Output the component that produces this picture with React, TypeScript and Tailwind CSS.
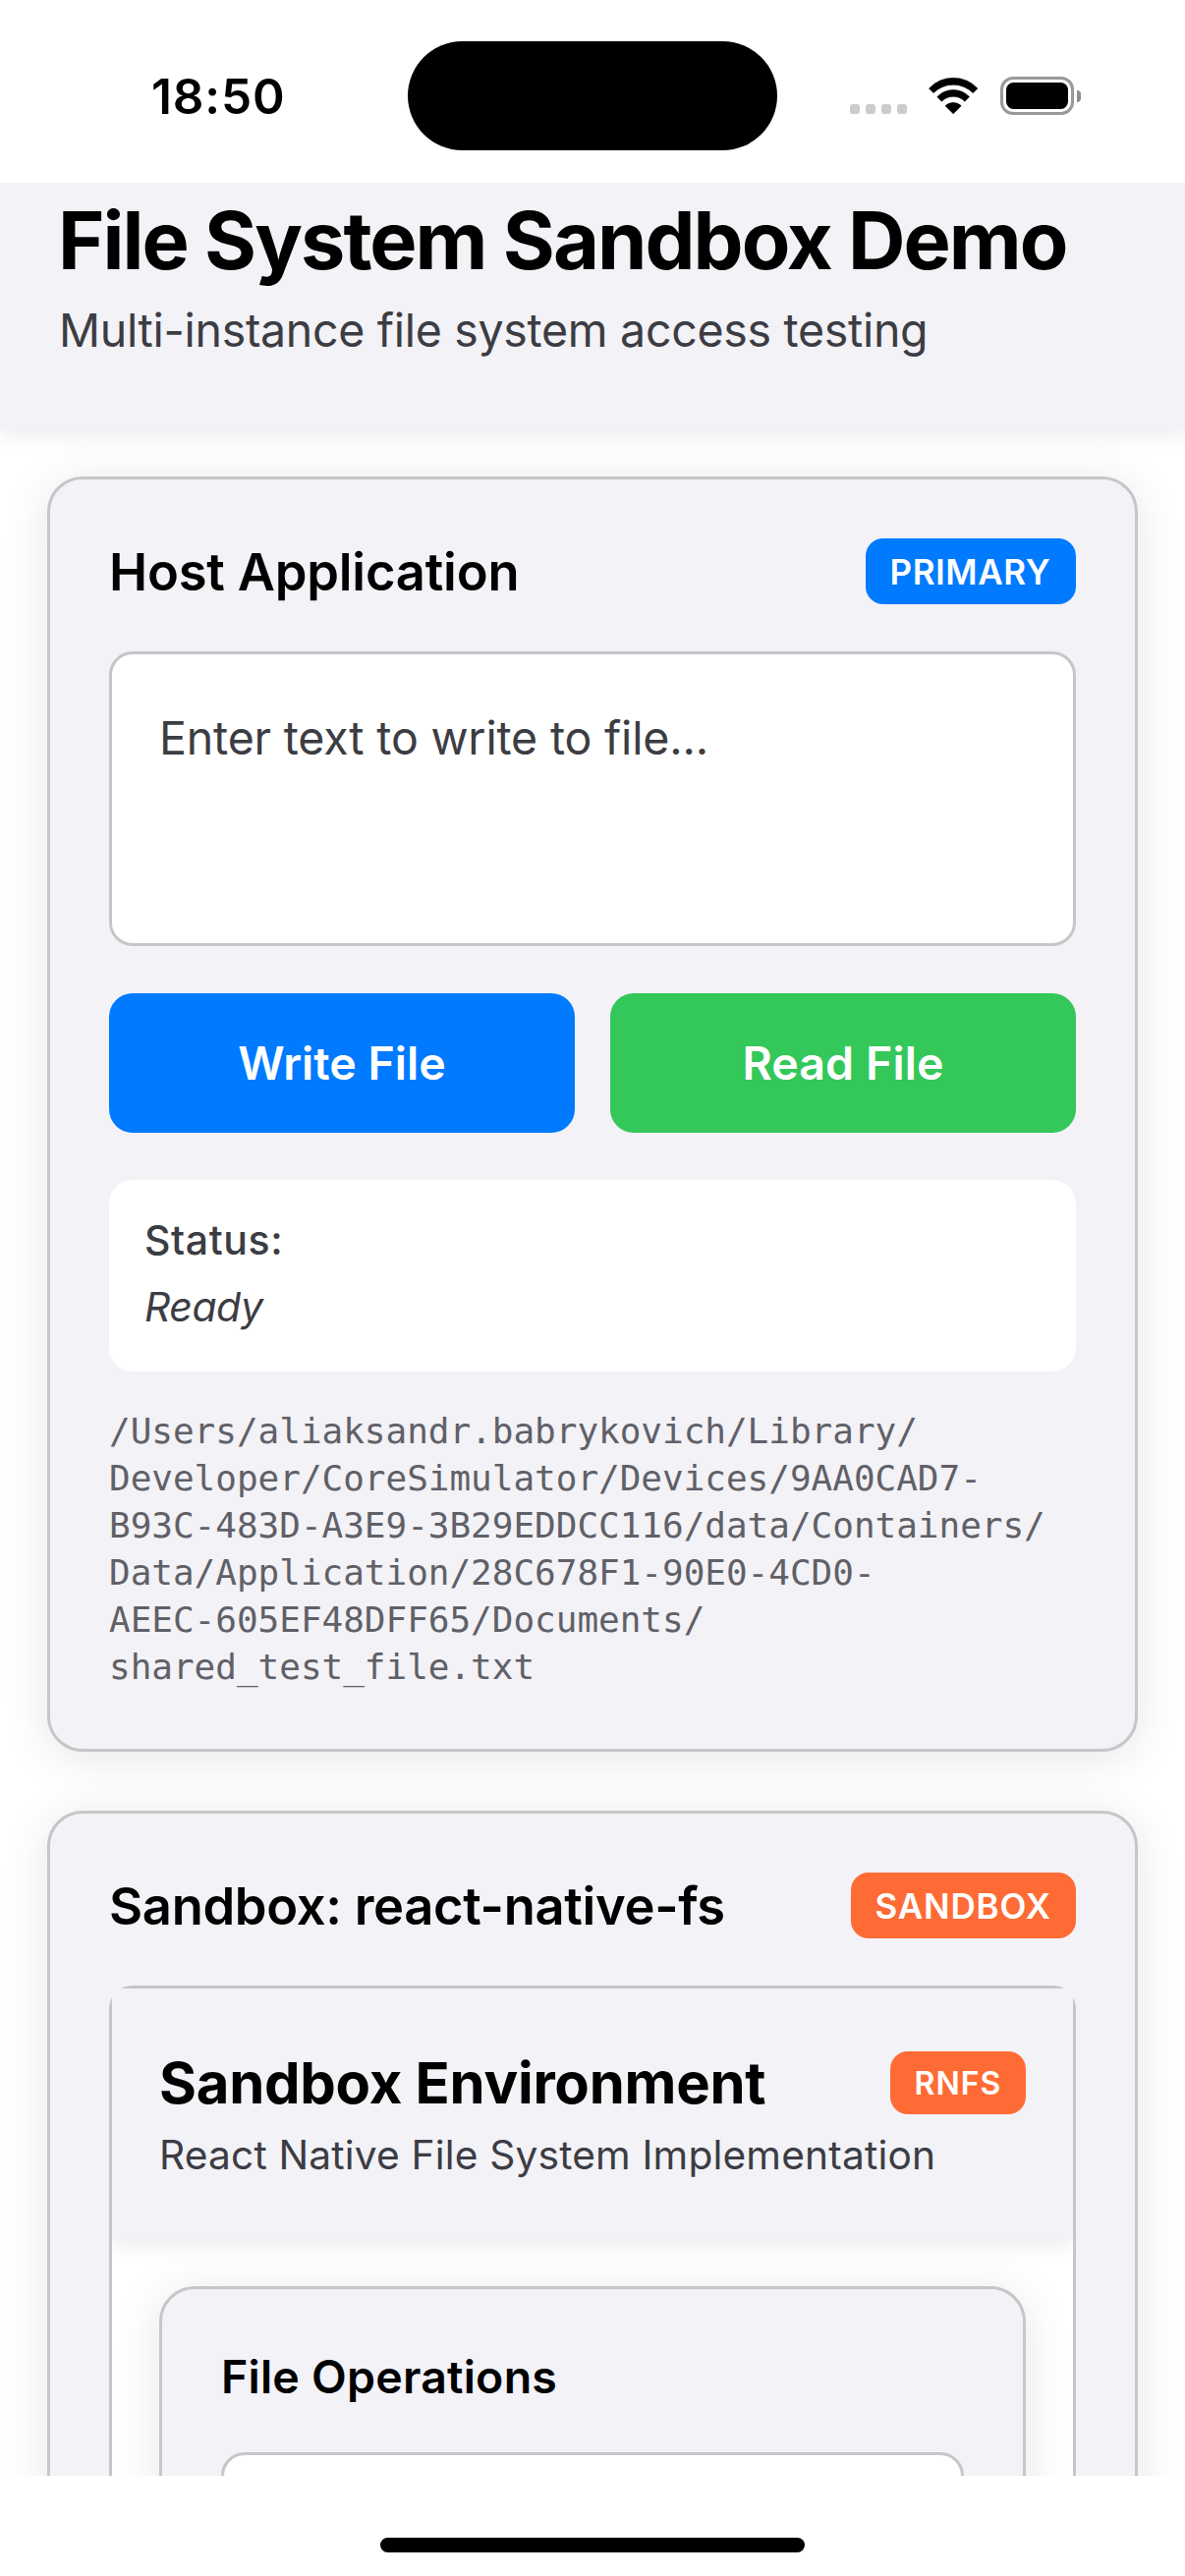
import type { ReactNode } from "react";

const PATH_LINES = [
  "/Users/aliaksandr.babrykovich/Library/",
  "Developer/CoreSimulator/Devices/9AA0CAD7-",
  "B93C-483D-A3E9-3B29EDDCC116/data/Containers/",
  "Data/Application/28C678F1-90E0-4CD0-",
  "AEEC-605EF48DFF65/Documents/",
  "shared_test_file.txt",
];

function WifiIcon() {
  return (
    <svg className="h-[38px] w-[51px]" viewBox="0 0 51 38" fill="#000" stroke="#000" strokeWidth="0.6" strokeLinejoin="round">
      <path d="M0.5 11A33.7 33.7 0 0 1 49.9 11L45.3 15.6A28.4 28.4 0 0 0 5 15.6Z" />
      <path d="M8.8 19.6A22.4 22.4 0 0 1 41.5 19.6L36.9 24.2A16.5 16.5 0 0 0 13.4 24.2Z" />
      <path d="M17.1 28.8A11.4 11.4 0 0 1 33.2 28.8L25.2 36.8Z" />
    </svg>
  );
}

function BatteryIcon() {
  return (
    <div className="flex items-center">
      <div className="h-[39px] w-[75px] rounded-[13px] border-[3px] border-[#999999] p-[2.7px]">
        <div className="h-full w-full rounded-[7.5px] bg-black" />
      </div>
      <div className="ml-[3px] h-[12px] w-[4px] rounded-r-full bg-[#8e8e8e]" />
    </div>
  );
}

function StatusBar() {
  return (
    <div className="flex h-[186px] shrink-0 items-start bg-white">
      <div className="mt-[68px] ml-[154px] w-[260.5px] text-[49.5px] leading-[60px] font-semibold tracking-[0.87px]">
        18:50
      </div>
      <div className="mt-[41.5px] h-[111px] w-[376.5px] rounded-full bg-black" />
      <div className="mt-[78px] ml-[74px] flex h-[39px] items-start">
        <div className="mt-[28px] flex gap-[6px]">
          {[0, 1, 2, 3].map((i) => (
            <div key={i} className="h-[10px] w-[10px] rounded-[3px] bg-[#cccccc]" />
          ))}
        </div>
        <div className="mt-px ml-[22px]">
          <WifiIcon />
        </div>
        <div className="ml-[22px]">
          <BatteryIcon />
        </div>
      </div>
    </div>
  );
}

function Card({ className, children }: { className: string; children: ReactNode }) {
  return (
    <section
      className={`rounded-[36px] border-[3px] border-[#c6c6c8] bg-[#f2f2f7] p-[60px] shadow-[0_6px_48px_rgba(0,0,0,0.1)] ${className}`}
    >
      {children}
    </section>
  );
}

function Badge({ className, children }: { className: string; children: ReactNode }) {
  return (
    <span className={`block shrink-0 rounded-[18px] pl-[24.5px] font-semibold text-white ${className}`}>
      {children}
    </span>
  );
}

export default function App() {
  return (
    <div className="flex h-[2622px] w-[1206px] flex-col overflow-hidden bg-white font-['Inter',sans-serif] text-black">
      <StatusBar />

      <main className="h-[2334px] shrink-0 overflow-hidden">
        <header className="h-[251px] bg-[#f2f2f7] px-[60px] pt-[9px] shadow-[0_3px_24px_rgba(0,0,0,0.1)]">
          <h1 className="-ml-px text-[81px] leading-[100px] font-bold tracking-[-1.955px] whitespace-nowrap">
            File System Sandbox Demo
          </h1>
          <p className="mt-[13px] text-[46.5px] leading-[56px] tracking-[-0.3px] text-[#3c3c43]">
            Multi-instance file system access testing
          </p>
        </header>

        <div className="flex flex-col gap-[60px] px-12 pt-12">
          <Card className="h-[1298px]">
            <div className="flex items-center justify-between">
              <h2 className="h-[67px] text-[52.5px] leading-[69px] font-semibold tracking-[-0.2px]">Host Application</h2>
              <Badge className="h-[67px] w-[214px] bg-[#007aff] text-[35px] leading-[69px] tracking-[0.58px]">PRIMARY</Badge>
            </div>
            <div className="mt-12 h-[300px] rounded-3xl border-[3px] border-[#c6c6c8] bg-white px-12 pt-[56px] text-[46.5px] leading-[58px] tracking-[-0.18px] text-[#3c3c43]">
              Enter text to write to file...
            </div>
            <div className="mt-12 flex gap-9 text-center text-[46.5px] leading-[142px] font-semibold text-white">
              <button className="h-[142px] flex-1 rounded-3xl bg-[#007aff]">Write File</button>
              <button className="h-[142px] flex-1 rounded-3xl bg-[#34c759] tracking-[0.1px]">Read File</button>
            </div>
            <div className="mt-12 h-[195px] rounded-3xl bg-white p-9 text-[41px] text-[#3c3c43]">
              <p className="leading-[50px] font-medium tracking-[0.6px]">Status:</p>
              <p className="mt-[13px] leading-[60px] tracking-[-0.5px] italic">Ready</p>
            </div>
            <p className="mt-[37px] font-['DejaVu_Sans_Mono',monospace] text-[36px] leading-[48px] tracking-[-0.02px] whitespace-nowrap text-[#606067]">
              {PATH_LINES.map((line) => (
                <span key={line} className="block">
                  {line}
                </span>
              ))}
            </p>
          </Card>

          <Card className="h-[1400px]">
            <div className="flex items-center justify-between">
              <h2 className="h-[67px] text-[52.5px] leading-[69px] font-semibold tracking-[-0.33px]">Sandbox: react-native-fs</h2>
              <Badge className="h-[67px] w-[229px] bg-[#ff6b35] text-[35px] leading-[69px] tracking-[0.85px]">SANDBOX</Badge>
            </div>
            <div className="mt-12 h-[1200px] rounded-3xl border-[3px] border-[#c6c6c8] bg-white">
              <div className="h-full overflow-hidden">
                <div className="h-[255px] bg-[#f2f2f7] px-12 pt-[60px] shadow-[0_3px_24px_rgba(0,0,0,0.1)]">
                  <div className="flex items-center justify-between">
                    <h3 className="h-[72px] text-[58px] leading-[73px] font-bold tracking-[-0.26px]">Sandbox Environment</h3>
                    <Badge className="h-[64px] w-[138px] bg-[#ff6b35] text-[32px] leading-[65px] tracking-[1px]">RNFS</Badge>
                  </div>
                  <p className="mt-[13px] text-[40.7px] leading-[50px] tracking-[0.16px] text-[#3c3c43]">
                    React Native File System Implementation
                  </p>
                </div>
                <div className="p-12">
                  <Card className="h-[900px]">
                    <h4 className="text-[46.5px] leading-[58px] font-semibold tracking-[0.22px]">File Operations</h4>
                    <div className="mt-12 h-[300px] rounded-3xl border-[3px] border-[#c6c6c8] bg-white" />
                  </Card>
                </div>
              </div>
            </div>
          </Card>
        </div>
      </main>

      <footer className="flex h-[102px] shrink-0 justify-center bg-white pt-[63px]">
        <div className="h-[15px] w-[432px] rounded-full bg-black" />
      </footer>
    </div>
  );
}
